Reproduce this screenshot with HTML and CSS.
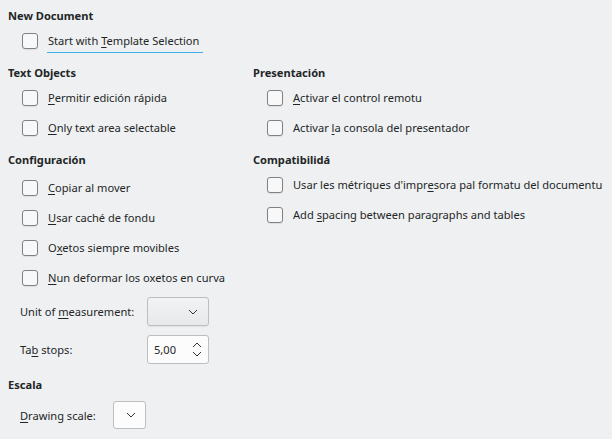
FILE: index.html
```html
<!DOCTYPE html>
<html>
<head>
<meta charset="utf-8">
<link rel="stylesheet" href="styles.css">
</head>
<body>
<div class="page">
  <section class="sec sec-top">
    <h2 class="head">New Document</h2>
    <div class="items">
      <label class="check"><span class="box"></span><span class="txt focus">Start with <u>T</u>emplate Selection</span></label>
    </div>
  </section>

  <div class="cols">
    <div class="col col-left">
      <section class="sec">
        <h2 class="head">Text Objects</h2>
        <div class="items">
          <label class="check"><span class="box"></span><span class="txt"><u>P</u>ermitir edición rápida</span></label>
          <label class="check"><span class="box"></span><span class="txt"><u>O</u>nly text area selectable</span></label>
        </div>
      </section>
      <section class="sec">
        <h2 class="head">Configuración</h2>
        <div class="items items-config">
          <label class="check"><span class="box"></span><span class="txt"><u>C</u>opiar al mover</span></label>
          <label class="check"><span class="box"></span><span class="txt"><u>U</u>sar caché de fondu</span></label>
          <label class="check"><span class="box"></span><span class="txt">O<u>x</u>etos siempre movibles</span></label>
          <label class="check"><span class="box"></span><span class="txt"><u>N</u>un deformar los oxetos en curva</span></label>
        </div>
        <div class="form">
          <span class="flabel">Unit of <u>m</u>easurement:</span>
          <div class="combo combo-btn"><svg class="chev" width="10" height="6" viewBox="0 0 10 6"><path d="M1 1 L5 5 L9 1" fill="none" stroke="#31363b" stroke-width="1"/></svg></div>
          <span class="flabel">Ta<u>b</u> stops:</span>
          <div class="spin"><span class="spin-val">5,00</span>
            <span class="spin-arrows">
              <svg width="10" height="6" viewBox="0 0 10 6"><path d="M1 5 L5 1 L9 5" fill="none" stroke="#31363b" stroke-width="1"/></svg>
              <svg width="10" height="6" viewBox="0 0 10 6"><path d="M1 1 L5 5 L9 1" fill="none" stroke="#31363b" stroke-width="1"/></svg>
            </span>
          </div>
        </div>
      </section>
      <section class="sec sec-scale">
        <h2 class="head">Escala</h2>
        <div class="form form-scale">
          <span class="flabel"><u>D</u>rawing scale:</span>
          <div class="combo combo-white"><svg class="chev" width="10" height="6" viewBox="0 0 10 6"><path d="M1 1 L5 5 L9 1" fill="none" stroke="#31363b" stroke-width="1"/></svg></div>
        </div>
      </section>
    </div>

    <div class="col col-right">
      <section class="sec">
        <h2 class="head">Presentación</h2>
        <div class="items">
          <label class="check"><span class="box"></span><span class="txt"><u>A</u>ctivar el control remotu</span></label>
          <label class="check"><span class="box"></span><span class="txt">Activar <u>l</u>a consola del presentador</span></label>
        </div>
      </section>
      <section class="sec">
        <h2 class="head">Compatibilidá</h2>
        <div class="items">
          <label class="check"><span class="box"></span><span class="txt">Usar les métriques d'impr<u>e</u>sora pal formatu del documentu</span></label>
          <label class="check"><span class="box"></span><span class="txt">Add <u>s</u>pacing between paragraphs and tables</span></label>
        </div>
      </section>
    </div>
  </div>
</div>
</body>
</html>
```

FILE: styles.css
```css
html, body {
  margin: 0;
  padding: 0;
}
body {
  background: #eff0f1;
  color: #232627;
  font-family: "Noto Sans", "DejaVu Sans", sans-serif;
  font-size: 11.1px;
  width: 612px;
  height: 439px;
  overflow: hidden;
}
.page {
  padding: 8px 0 0 8px;
}
u {
  text-decoration: underline;
  text-underline-offset: 2px;
  text-decoration-thickness: 1px;
}
.head {
  margin: 0;
  font-size: 11.1px;
  font-weight: bold;
  line-height: 16px;
  height: 16px;
}
.items {
  display: flex;
  flex-direction: column;
  padding: 2px 0 0 14px;
}
.items-config {
  padding-top: 5px;
}
.check {
  display: flex;
  align-items: center;
  height: 30px;
  gap: 10px;
}
.box {
  width: 14px;
  height: 14px;
  border: 1px solid #7f8284;
  border-radius: 3px;
  background: #f8f8f8;
  box-shadow: 0 1px 1px rgba(0,0,0,0.08);
  flex: none;
}
.txt {
  line-height: 16px;
  white-space: nowrap;
}
.focus {
  position: relative;
}
.focus::after {
  content: "";
  position: absolute;
  left: -1px;
  right: -4px;
  bottom: -4px;
  height: 1px;
  background: #3daee9;
}
.sec-top {
  margin-bottom: 9px;
}
.cols {
  display: flex;
}
.col-left {
  width: 245px;
  display: flex;
  flex-direction: column;
}
.col-left > .sec + .sec {
  margin-top: 9px;
}
.col-right {
  display: flex;
  flex-direction: column;
}
.col-right > .sec + .sec {
  margin-top: 9px;
}
.col-left > .sec + .sec-scale {
  margin-top: 13px;
}
.form {
  display: grid;
  grid-template-columns: 127px 62px;
  row-gap: 9px;
  align-items: center;
  padding: 4px 0 0 12px;
}
.form-scale {
  grid-template-columns: 93px 33px;
  padding-top: 8px;
}
.flabel {
  white-space: nowrap;
}
.combo, .spin {
  box-sizing: border-box;
  height: 29px;
  border: 1px solid #bcbebf;
  border-radius: 3px;
  display: flex;
  align-items: center;
}
.combo {
  justify-content: flex-end;
  padding-right: 10px;
}
.combo-btn {
  background: linear-gradient(#f1f2f3, #e8e9ea);
  box-shadow: 0 1px 1px rgba(0,0,0,0.06);
}
.combo-white {
  background: #fcfcfc;
  height: 28px;
  padding-right: 9px;
}
.spin {
  background: #fcfcfc;
  justify-content: space-between;
  padding: 0 6px 0 6px;
}
.spin-arrows {
  display: flex;
  flex-direction: column;
  gap: 3px;
}
.spin-arrows svg, .chev {
  display: block;
}
```
